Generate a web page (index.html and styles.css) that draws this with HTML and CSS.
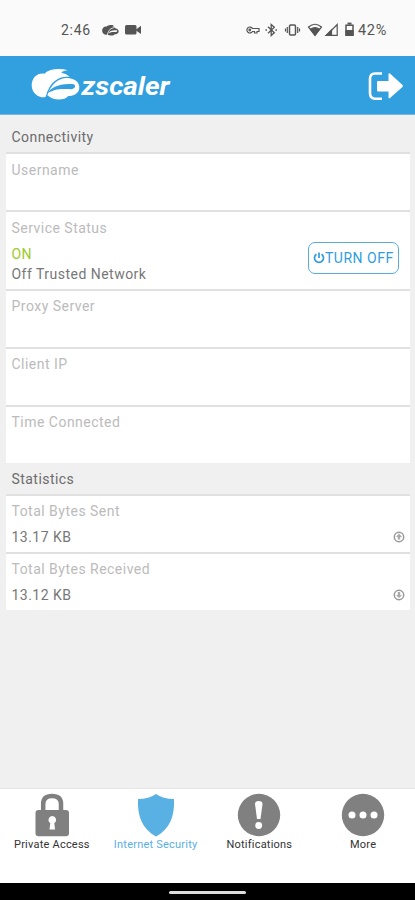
FILE: index.html
```html
<!DOCTYPE html>
<html lang="en">
<head>
<meta charset="utf-8">
<title>Zscaler</title>
<link rel="stylesheet" href="styles.css">
</head>
<body>
<div class="screen">
  <div class="status">
    <span class="time">2:46</span>
    <svg class="s-cloud" width="17" height="11" viewBox="94 208 147 94" preserveAspectRatio="none">
      <path d="M137 290C125 297 96 284 95 257C95 233 112 218 133 221C148 207 178 204 204 211C194 211 188 215 184 218C195 220 203 224 209 231C181 227 151 240 137 290Z" class="mini-fill"/>
      <path d="M142 286C154 249 181 230 209 235C234 240 241 255 237 270C232 283 218 288 205 288C194 302 160 303 142 286Z" class="mini-fill"/>
      <path d="M143 283C151 265 181 248 222 253C228 258 226 265 215 268C181 265 160 270 143 283Z" class="mini-cut"/>
    </svg>
    <svg class="s-video" width="17" height="10" viewBox="0 0 17 10"><rect width="11.500" height="9.500" rx="1.500" fill="#555"/><path d="M11 4.500L16 .8V9L11 5.500Z" fill="#555"/></svg>
    <svg class="s-icons" width="112" height="18" viewBox="245 21 112 18" fill="none" stroke="#555" stroke-width="1.200">
      <path d="M252.500 28.500A3 3 0 1 0 252.500 31.500H254.500V33H257V31.500H259V28.500Z"/><circle cx="249.800" cy="30" r=".8"/>
      <path d="M268 26.800L274.300 32.800 271.200 35.500V24.500L274.300 27.200 268 33.200" stroke-width="1.300"/><path d="M265.500 30H267M275.500 30H277" stroke-width="1.600"/>
      <rect x="289.500" y="25" width="6" height="10" rx="1.200" stroke-width="1.500"/><path d="M287.300 27V33M285.500 28.500V31.500M297.700 27V33M299.500 28.500V31.500"/>
      <path d="M308.500 27Q315 21.500 321.500 27L315 35Z"/><path d="M310.500 29.300Q315 26 319.500 29.300L315 35.500Z" fill="#555"/>
      <path d="M326.500 35.400H337.200V24.500Z"/><path d="M326 35.500L331.500 30V35.500Z" fill="#555"/>
      <path d="M346 25.300H353V35.300H346Z" stroke-width="1.500"/><path d="M347.500 23.600H351.500" stroke-width="2"/><path d="M346 30.500H353V35H346Z" fill="#555"/>
    </svg>
    <span class="battery">42%</span>
  </div>
  <header class="bar">
    <svg class="logo" width="150" height="44" viewBox="25 62 150 44">
      <g transform="scale(.33333)">
        <path d="M137 290C125 297 96 284 95 257C95 233 112 218 133 221C148 207 178 204 204 211C194 211 188 215 184 218C195 220 203 224 209 231C181 227 151 240 137 290Z" class="cloud-fill"/>
        <path d="M142 286C154 249 181 230 209 235C234 240 241 255 237 270C232 283 218 288 205 288C194 302 160 303 142 286Z" class="cloud-fill"/>
        <path d="M143 280C151 263 181 248 222 253C228 258 226 265 215 268C181 265 160 268 143 280Z" class="cloud-cut"/>
      </g>
      <text x="81.500" y="94.500" class="wordmark" textLength="88" lengthAdjust="spacingAndGlyphs">zscaler</text>
    </svg>
    <svg class="exit" width="36" height="30" viewBox="368 71 36 30"><path d="M382 73.500H375Q370 73.500 370 79V93Q370 98.700 375 98.700H382" fill="none" stroke="#fff" stroke-width="2.600"/><path d="M378 81Q377 81 377 82V90.500Q377 91.500 378 91.500H388.500V97.500Q388.800 99 390 98L402.500 87Q403.300 86 402.500 85L390 73.500Q388.800 72.700 388.500 74V81Z" fill="#fff"/></svg>
  </header>
  <main>
    <h2>Connectivity</h2>
    <section>
      <div class="row user"><p class="label">Username</p></div>
      <div class="row tall">
        <div><p class="label">Service Status</p><p class="on">ON</p><p class="net">Off Trusted Network</p></div>
        <button><svg width="12" height="12" viewBox="0 0 12 12" fill="none" stroke="#309dde" stroke-width="1.700"><path d="M3.500 2.200A4.500 4.500 0 1 0 8.500 2.200M6 .5V6"/></svg><span>TURN OFF</span></button>
      </div>
      <div class="row"><p class="label">Proxy Server</p></div>
      <div class="row"><p class="label">Client IP</p></div>
      <div class="row"><p class="label">Time Connected</p></div>
    </section>
    <h2 class="stats">Statistics</h2>
    <section>
      <div class="row"><div><p class="label">Total Bytes Sent</p><p class="value">13.17 KB</p></div>
        <svg class="dir" width="12" height="12" viewBox="0 0 12 12"><circle cx="6" cy="6" r="4.700" fill="none" stroke="#999" stroke-width="1.500"/><path d="M6 2.500L9 6H7.200V8.500H4.800V6H3Z" fill="#aaa"/></svg></div>
      <div class="row"><div><p class="label">Total Bytes Received</p><p class="value">13.12 KB</p></div>
        <svg class="dir" width="12" height="12" viewBox="0 0 12 12"><circle cx="6" cy="6" r="4.700" fill="none" stroke="#999" stroke-width="1.500"/><path d="M6 9L9 6H7.200V3H4.800V6H3Z" fill="#aaa"/></svg></div>
    </section>
  </main>
  <nav>
    <a><svg width="44" height="44" viewBox="30 793 44 44"><path d="M43.200 812V804Q43.200 796 52 796Q61 796 61 804V812" fill="none" stroke="#808080" stroke-width="4.500"/><rect x="35.500" y="810" width="33.500" height="26.300" rx="3" fill="#808080"/><path d="M52.300 816A3.800 3.800 0 0 1 54.300 823L55 829.500H49.500L50.300 823A3.800 3.800 0 0 1 52.300 816Z" fill="#fff"/></svg><span>Private Access</span></a>
    <a class="active"><svg width="44" height="44" viewBox="134 793 44 44"><path d="M156 794Q163 799 174 799Q175.500 826 156 836.500Q136.500 826 138 799Q149 799 156 794Z" fill="#58b0e3"/></svg><span>Internet Security</span></a>
    <a><svg width="44" height="44" viewBox="238 793 44 44"><circle cx="260" cy="815" r="21.200" fill="#808080"/><path d="M256 804Q256 801 259.800 801Q263.500 801 263.500 804L261.500 819H258Z" fill="#fff"/><circle cx="259.700" cy="825.500" r="3.400" fill="#fff"/></svg><span>Notifications</span></a>
    <a><svg width="44" height="44" viewBox="342 793 44 44"><circle cx="364" cy="815" r="21.200" fill="#808080"/><g fill="#fff"><circle cx="353" cy="815" r="3.500"/><circle cx="364" cy="815" r="3.500"/><circle cx="375" cy="815" r="3.500"/></g></svg><span>More</span></a>
  </nav>
  <footer><i></i></footer>
</div>
</body>
</html>
```
FILE: styles.css
```css
* { box-sizing: border-box; }
body, p, h2 { margin: 0; }
body { font-family: Roboto, "Liberation Sans", sans-serif; background: #f0f0f0; }
.screen { width: 415px; height: 900px; display: flex; flex-direction: column; overflow: hidden; }
.status { height: 56px; flex: none; background: #fafafa; display: flex; align-items: center; padding: 4px 0 0 61px; color: #555; font-size: 14px; }
.status svg { flex: none; }
.time { width: 41px; letter-spacing: .7px; }
.s-video { margin-left: 6px; }
.s-icons { margin-left: 103px; }
.battery { margin-left: 1px; font-size: 14.5px; letter-spacing: .7px; }
.mini-fill { fill: #555; }
.mini-cut { fill: #fafafa; }
.cloud-fill { fill: #fff; }
.cloud-cut { fill: #329fdf; }
.bar { height: 59px; flex: none; background: #329fdf; border-bottom: 1px solid #79b9df; display: flex; justify-content: space-between; align-items: center; padding: 0 11px 0 25px; }
.logo { margin-top: -2px; }
.exit { margin-top: 2px; }
.wordmark { font: italic 700 25px Roboto, sans-serif; fill: #fff; }
main { flex: 1; padding: 0 5px 0 6px; }
h2 { height: 37px; padding: 12px 5px 0 5.5px; font-size: 14px; line-height: 20px; font-weight: 400; letter-spacing: .45px; color: #6c6c6c; }
h2.stats { height: 31px; padding-top: 6px; }
.row { height: 58px; background: #fff; border-top: 2px solid #e0e0e0; padding: 5px 5px 0 5.5px; display: flex; justify-content: space-between; font-size: 14px; line-height: 20px; letter-spacing: .48px; }
.row.user, .row.tall { padding-top: 6px; }
.row.tall { height: 79px; padding-right: 11px; }
.label { color: #bbb; }
.on { color: #9bcb2d; margin-top: 6px; }
.net, .value { color: #777; }
.value { margin-top: 6px; }
button { width: 91px; height: 32px; margin-top: 24px; padding: 0 4px; border: 1px solid #58abdf; border-radius: 7px; background: #fff; color: #309dde; font: 14px Roboto, sans-serif; letter-spacing: .5px; display: flex; align-items: center; white-space: nowrap; }
button svg { flex: none; }
.dir { margin-top: 30px; flex: none; }
nav { height: 95px; flex: none; background: #fff; border-top: 1px solid #e6e6e6; display: grid; grid-template-columns: repeat(4, 1fr); }
nav a { display: flex; flex-direction: column; align-items: center; padding-top: 4px; font-size: 11px; line-height: 16px; letter-spacing: .22px; color: #333; white-space: nowrap; }
nav .active { color: #58b0e3; }
footer { height: 17px; flex: none; background: #000; display: flex; justify-content: center; padding-top: 8px; }
footer i { width: 77px; height: 3px; border-radius: 2px; background: #ddd; }
```
